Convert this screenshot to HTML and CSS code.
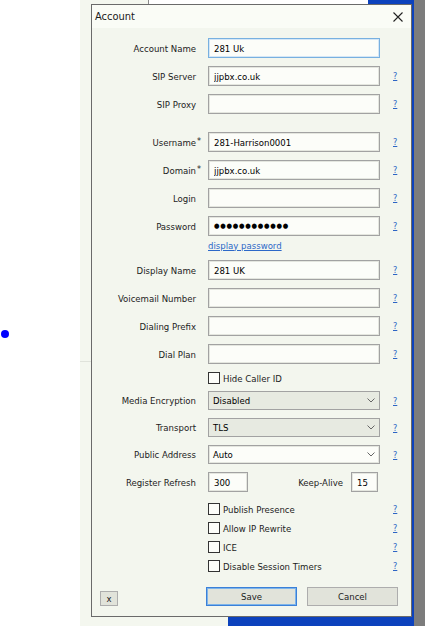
FILE: index.html
```html
<!DOCTYPE html>
<html lang="en">
<head>
<meta charset="utf-8">
<title>Account</title>
<link rel="stylesheet" href="styles.css">
</head>
<body>
<div class="desktop">
  <div class="bg-window">
    <div class="bg-side"><div class="bg-side-sep"></div></div>
  </div>
  <div class="blue-window"></div>
  <div class="blue-bar"></div>
  <div class="grey-edge"></div>
  <div class="dot"></div>

  <div class="dialog">
    <div class="titlebar">
      <span class="title">Account</span>
      <svg class="close" viewBox="0 0 10 10" width="10" height="10"><path d="M0.5 0.5 L9.5 9.5 M9.5 0.5 L0.5 9.5" stroke="#222" stroke-width="1.1" fill="none"/></svg>
    </div>

    <div class="form">
      <div class="row"><label class="lbl">Account Name</label><input class="field focus" value="281 Uk"></div>
      <div class="row"><label class="lbl">SIP Server</label><input class="field" value="jjpbx.co.uk"><a class="help">?</a></div>
      <div class="row"><label class="lbl">SIP Proxy</label><input class="field" value=""><a class="help">?</a></div>

      <div class="row section"><label class="lbl">Username<span class="req">*</span></label><input class="field" value="281-Harrison0001"><a class="help">?</a></div>
      <div class="row"><label class="lbl">Domain<span class="req">*</span></label><input class="field" value="jjpbx.co.uk"><a class="help">?</a></div>
      <div class="row"><label class="lbl">Login</label><input class="field" value=""><a class="help">?</a></div>
      <div class="row"><label class="lbl">Password</label><div class="field password">●●●●●●●●●●●●</div><a class="help">?</a></div>
      <div class="row linkrow"><span class="lbl"></span><a class="link">display password</a></div>

      <div class="row"><label class="lbl">Display Name</label><input class="field" value="281 UK"><a class="help">?</a></div>
      <div class="row"><label class="lbl">Voicemail Number</label><input class="field" value=""><a class="help">?</a></div>
      <div class="row"><label class="lbl">Dialing Prefix</label><input class="field" value=""><a class="help">?</a></div>
      <div class="row"><label class="lbl">Dial Plan</label><input class="field" value=""><a class="help">?</a></div>
      <div class="row check"><span class="lbl"></span><div class="group"><span class="box"></span><span class="ctext">Hide Caller ID</span></div></div>

      <div class="row sel first-sel"><label class="lbl">Media Encryption</label><div class="field select disabled"><span>Disabled</span><svg class="chev" viewBox="0 0 8 5" width="8" height="5"><path d="M0.5 0.5 L4 4 L7.5 0.5" stroke="#666" stroke-width="1" fill="none"/></svg></div><a class="help">?</a></div>
      <div class="row sel"><label class="lbl">Transport</label><div class="field select disabled"><span>TLS</span><svg class="chev" viewBox="0 0 8 5" width="8" height="5"><path d="M0.5 0.5 L4 4 L7.5 0.5" stroke="#666" stroke-width="1" fill="none"/></svg></div><a class="help">?</a></div>
      <div class="row sel"><label class="lbl">Public Address</label><div class="field select"><span>Auto</span><svg class="chev" viewBox="0 0 8 5" width="8" height="5"><path d="M0.5 0.5 L4 4 L7.5 0.5" stroke="#666" stroke-width="1" fill="none"/></svg></div><a class="help">?</a></div>
      <div class="row refresh"><label class="lbl">Register Refresh</label>
        <div class="group">
          <input class="field short" value="300">
          <label class="ka-lbl">Keep-Alive</label>
          <input class="field tiny" value="15">
        </div>
      </div>

      <div class="checks">
        <div class="row check"><span class="lbl"></span><div class="group"><span class="box"></span><span class="ctext">Publish Presence</span></div><a class="help">?</a></div>
        <div class="row check"><span class="lbl"></span><div class="group"><span class="box"></span><span class="ctext">Allow IP Rewrite</span></div><a class="help">?</a></div>
        <div class="row check"><span class="lbl"></span><div class="group"><span class="box"></span><span class="ctext">ICE</span></div><a class="help">?</a></div>
        <div class="row check"><span class="lbl"></span><div class="group"><span class="box"></span><span class="ctext">Disable Session Timers</span></div><a class="help">?</a></div>
      </div>

      <div class="buttons">
        <button class="btn small">x</button>
        <div class="main-btns">
          <button class="btn primary">Save</button>
          <button class="btn">Cancel</button>
        </div>
      </div>
    </div>
  </div>
</div>
</body>
</html>
```

FILE: styles.css
```css
* { box-sizing: border-box; }
html, body { margin: 0; padding: 0; }
body {
  width: 425px;
  height: 626px;
  overflow: hidden;
  background: #ffffff;
  font-family: "DejaVu Sans Condensed", "DejaVu Sans", sans-serif;
  font-stretch: condensed;
  font-size: 9.5px;
  color: #1c1c1c;
}
.desktop { position: relative; width: 425px; height: 626px; }

.bg-window {
  position: absolute; left: 80px; top: 0; width: 288px; height: 626px;
  background: linear-gradient(#ffffff, #ffffff) no-repeat right top / 219px 5px, #f4f7ef;
  display: flex;
}
.bg-side {
  width: 69px;
  background: linear-gradient(#8a8a8a, #8a8a8a) no-repeat right top / 1px 5px;
}
.bg-side-sep { margin-top: 361px; height: 1px; background: #e0e3db; }
.blue-window { position: absolute; left: 368px; top: 0; width: 46px; height: 626px; background: #0c42bd; }
.blue-bar { position: absolute; left: 228px; top: 617px; width: 140px; height: 9px; background: #0c42bd; }
.grey-edge { position: absolute; left: 414px; top: 0; width: 11px; height: 626px; background: #7c7c7c; }
.dot { position: absolute; left: 1px; top: 330px; width: 8px; height: 8px; border-radius: 50%; background: #0000ff; }

.dialog {
  position: absolute; left: 91px; top: 4px; width: 321px; height: 613px;
  border: 1px solid #6a6a6a;
  background: #f3f6ee;
  display: flex; flex-direction: column;
}
.titlebar {
  height: 23px; flex: none;
  background: #fafcf6;
  display: flex; align-items: center; justify-content: space-between;
  padding: 0 8px 0 3px;
}
.title { font-size: 11px; color: #1a1a1a; }
.close { display: block; width: 10px; height: 10px; }

.form { display: flex; flex-direction: column; gap: 8px; padding-top: 10px; }
.row { display: flex; align-items: center; height: 20px; flex: none; }
.row.section { margin-top: 10px; }
.row.linkrow { height: 14px; margin-top: -6px; }
.row.check { height: 12px; }
.row.sel { height: 19px; }
.row.first-sel { margin-top: -1px; }

.lbl { width: 104px; margin-right: 12px; text-align: right; flex: none; position: relative; white-space: nowrap; }
.req { position: absolute; left: calc(100% + 1px); top: -1px; font-size: 9px; }

.field {
  width: 172px; height: 20px; flex: none;
  border: 1px solid #a2a2a2;
  box-shadow: inset 0 0 0 1px #e4e6df;
  background: #fcfdf9;
  padding: 0 5px;
  font: inherit; color: #000;
  display: flex; align-items: center;
  outline: none; margin: 0;
}
.field.focus { border-color: #78b0e0; box-shadow: inset 0 0 0 1px #d5e7f6; }
.field.password { font-size: 7px; letter-spacing: 0.75px; padding-left: 5px; }
.field.select { height: 19px; justify-content: space-between; padding: 0 4px 0 4px; }
.field.select.disabled { background: #e7eae1; box-shadow: none; }
.chev { display: block; }
.field.short { width: 40px; }
.field.tiny { width: 27px; }

.help { margin-left: 13px; font-size: 9px; color: #2c64c4; text-decoration: underline; cursor: pointer; }
.link { color: #2c68c8; text-decoration: underline; cursor: pointer; }

.group { width: 172px; flex: none; display: flex; align-items: center; }
.ka-lbl { margin-left: auto; margin-right: 8px; }
.refresh .field.tiny { margin-right: 2px; }

.box { width: 12px; height: 12px; border: 1px solid #333; background: #fcfdf9; flex: none; }
.ctext { margin-left: 3px; white-space: nowrap; }

.checks { display: flex; flex-direction: column; gap: 7px; margin-top: 3px; }

.buttons { display: flex; align-items: flex-end; padding-left: 8px; margin-top: 7px; }
.btn {
  font: inherit; color: #1c1c1c;
  background: #e1e3da;
  border: 1px solid #adadad;
  height: 19px; width: 91px; padding: 0; margin: 0;
}
.btn.small { width: 18px; height: 15px; }
.btn.primary { border-color: #3b80d8; box-shadow: inset 0 0 0 1px #7db4ea; }
.main-btns { display: flex; gap: 10px; margin-left: 88px; }
```
